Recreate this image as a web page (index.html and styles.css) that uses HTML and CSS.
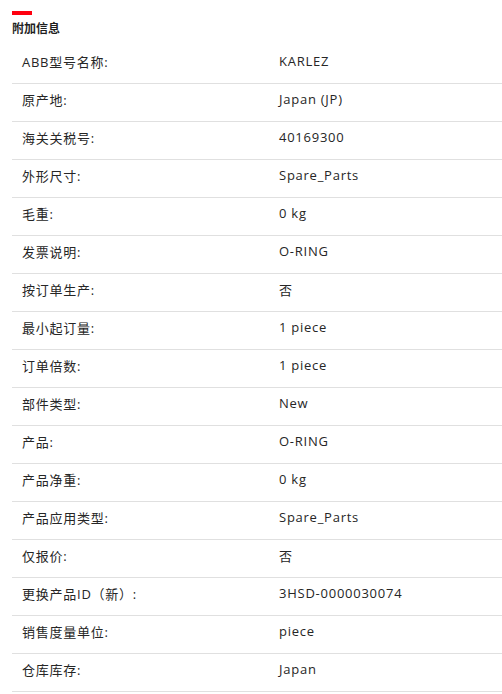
FILE: index.html
```html
<!DOCTYPE html>
<html lang="zh">
<head>
<meta charset="utf-8">
<link rel="stylesheet" href="styles.css">
</head>
<body>
<section class="info">
  <div class="accent"></div>
  <h2 class="title">附加信息</h2>
  <div class="table">
    <div class="row"><div class="label">ABB型号名称:</div><div class="value">KARLEZ</div></div>
    <div class="row"><div class="label">原产地:</div><div class="value">Japan (JP)</div></div>
    <div class="row"><div class="label">海关关税号:</div><div class="value">40169300</div></div>
    <div class="row"><div class="label">外形尺寸:</div><div class="value">Spare_Parts</div></div>
    <div class="row"><div class="label">毛重:</div><div class="value">0 kg</div></div>
    <div class="row"><div class="label">发票说明:</div><div class="value">O-RING</div></div>
    <div class="row"><div class="label">按订单生产:</div><div class="value">否</div></div>
    <div class="row"><div class="label">最小起订量:</div><div class="value">1 piece</div></div>
    <div class="row"><div class="label">订单倍数:</div><div class="value">1 piece</div></div>
    <div class="row"><div class="label">部件类型:</div><div class="value">New</div></div>
    <div class="row"><div class="label">产品:</div><div class="value">O-RING</div></div>
    <div class="row"><div class="label">产品净重:</div><div class="value">0 kg</div></div>
    <div class="row"><div class="label">产品应用类型:</div><div class="value">Spare_Parts</div></div>
    <div class="row"><div class="label">仅报价:</div><div class="value">否</div></div>
    <div class="row"><div class="label">更换产品ID（新）:</div><div class="value">3HSD-0000030074</div></div>
    <div class="row"><div class="label">销售度量单位:</div><div class="value">piece</div></div>
    <div class="row"><div class="label">仓库库存:</div><div class="value">Japan</div></div>
  </div>
</section>
</body>
</html>
```
FILE: styles.css
```css
html, body {
  margin: 0;
  padding: 0;
  background: #ffffff;
}
body {
  font-family: "Open Sans", "Noto Sans CJK SC", sans-serif;
  color: #262626;
  overflow: hidden;
}
.info {
  padding: 11px 0 0 12px;
}
.accent {
  width: 20px;
  height: 4px;
  background: #ff000f;
}
.title {
  margin: 5px 0 0 0;
  font-size: 12px;
  line-height: 17px;
  font-weight: 700;
  color: #1f1f1f;
}
.table {
  margin-top: 9px;
  width: 490px;
}
.row {
  display: grid;
  grid-template-columns: 267px 1fr;
  box-sizing: border-box;
  height: 38px;
  padding-bottom: 7px;
  align-items: center;
  border-bottom: 1px solid #e0e0e0;
  font-size: 13px;
  letter-spacing: 0.75px;
}
.label {
  padding-left: 10px;
}
```
